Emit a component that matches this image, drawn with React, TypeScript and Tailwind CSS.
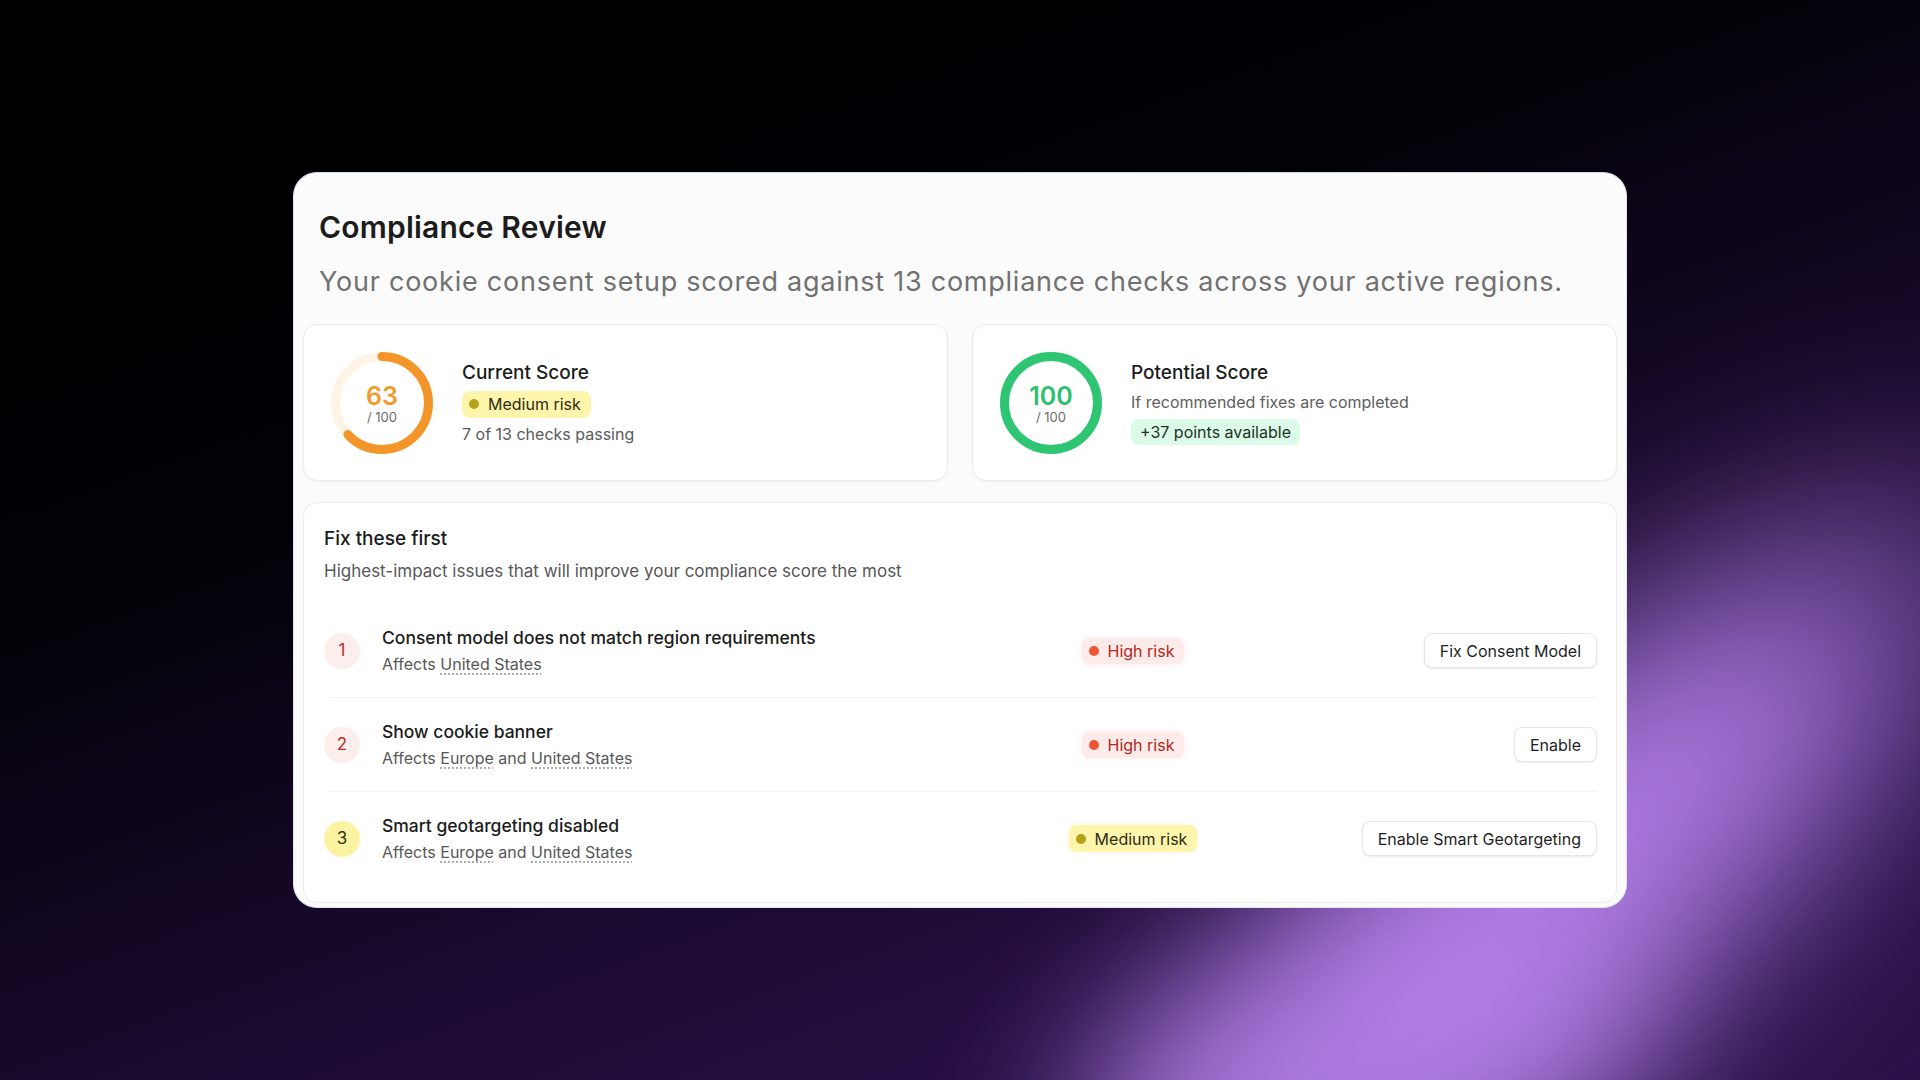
import React from 'react';

type Risk = 'high' | 'medium';

type Issue = {
  n: number;
  title: string;
  regions: string[];
  risk: Risk;
  action: string;
};

const issues: Issue[] = [
  { n: 1, title: 'Consent model does not match region requirements', regions: ['United States'], risk: 'high', action: 'Fix Consent Model' },
  { n: 2, title: 'Show cookie banner', regions: ['Europe', 'United States'], risk: 'high', action: 'Enable' },
  { n: 3, title: 'Smart geotargeting disabled', regions: ['Europe', 'United States'], risk: 'medium', action: 'Enable Smart Geotargeting' },
];

const ScoreRing: React.FC<{ value: number; color: string; track: string; textColor: string }> = ({ value, color, track, textColor }) => {
  const r = 46.5;
  const c = 2 * Math.PI * r;
  return (
    <div className="relative w-[102px] h-[102px] shrink-0">
      <svg width="102" height="102" viewBox="0 0 102 102" className="-rotate-90">
        <circle cx="51" cy="51" r={r} fill="none" stroke={track} strokeWidth="9" />
        <circle
          cx="51"
          cy="51"
          r={r}
          fill="none"
          stroke={color}
          strokeWidth="9"
          strokeLinecap="round"
          strokeDasharray={`${(c * value) / 100} ${c}`}
        />
      </svg>
      <div className="absolute inset-0 flex flex-col items-center justify-center pt-[2px]">
        <span className={`text-[25px] leading-[26px] font-semibold ${textColor}`}>{value}</span>
        <span className="text-[13px] leading-[16px] text-[#6b6b6b]">/ 100</span>
      </div>
    </div>
  );
};

const RiskBadge: React.FC<{ risk: Risk }> = ({ risk }) =>
  risk === 'high' ? (
    <span className="inline-flex items-center h-[26px] pl-[7px] pr-[10px] gap-[9px] rounded-[8px] bg-[#fdebea] text-[16px] text-[#b3281c] shadow-[0_0_6px_rgba(240,90,70,0.12)]">
      <span className="w-[10px] h-[10px] rounded-full bg-[#ef5535]" />
      High risk
    </span>
  ) : (
    <span className="inline-flex items-center h-[27px] pl-[7px] pr-[10px] gap-[9px] rounded-[8px] bg-[#fcf5ab] text-[16px] text-[#2f2c12] shadow-[0_0_6px_rgba(230,210,60,0.18)]">
      <span className="w-[10px] h-[10px] rounded-full bg-[#b5a218]" />
      Medium risk
    </span>
  );

const Region: React.FC<{ name: string }> = ({ name }) => (
  <span className="underline decoration-dotted decoration-[#9a9a9a] underline-offset-[4px]">{name}</span>
);

export default function App() {
  return (
    <div className="relative w-full h-[1080px] overflow-hidden bg-[linear-gradient(160deg,#000000_0%,#020106_35%,#160828_58%,#250e42_80%,#2a1148_100%)] font-['Inter',sans-serif] flex items-center justify-center">
      {/* lavender glow sweeping up the lower right */}
      <div className="absolute left-[910px] top-[650px] w-[1300px] h-[460px] rounded-full bg-[radial-gradient(closest-side,#b27ee6_0%,#ad7ae2_40%,rgba(176,124,228,0)_100%)] blur-[80px] -rotate-[42deg]" />
      <div className="absolute left-[1080px] top-[950px] w-[560px] h-[220px] rounded-full bg-[#b582e9] blur-[80px] -rotate-[22deg] opacity-90" />

      <div className="relative w-[1334px] h-[736px] rounded-[24px] bg-[#fbfbfb] border border-[#dfe4ef] border-t-[#cfdcef] pt-[8px] px-[8px] pb-[4px] flex flex-col">
        <div className="px-[17px] pt-[28px]">
          <h1 className="text-[30px] leading-[36px] font-semibold text-[#1c1c1c] tracking-[0.2px]">Compliance Review</h1>
          <p className="mt-[19px] text-[27px] leading-[36px] text-[#717171] tracking-[0.76px]">
            Your cookie consent setup scored against 13 compliance checks across your active regions.
          </p>
        </div>

        <div className="mt-[24px] grid grid-cols-2 gap-[24px] px-[1px]">
          <div className="h-[157px] rounded-[14px] bg-white border border-[#ececec] shadow-[0_1px_2px_rgba(0,0,0,0.04)] flex items-center pl-[27px] gap-[29px]">
            <ScoreRing value={63} color="#f4952a" track="#fdf4e6" textColor="text-[#f39a2e]" />
            <div className="flex flex-col">
              <span className="text-[19px] leading-[24px] font-medium text-[#1c1c1c]">Current Score</span>
              <span className="mt-[6px] self-start inline-flex items-center h-[27px] pl-[7px] pr-[10px] gap-[9px] rounded-[8px] bg-[#fcf5ab] text-[16px] text-[#2f2c12]">
                <span className="w-[10px] h-[10px] rounded-full bg-[#b5a218]" />
                Medium risk
              </span>
              <span className="mt-[5px] text-[16px] leading-[22px] text-[#5a5a5a]">7 of 13 checks passing</span>
            </div>
          </div>

          <div className="h-[157px] rounded-[14px] bg-white border border-[#ececec] shadow-[0_1px_2px_rgba(0,0,0,0.04)] flex items-center pl-[27px] gap-[29px]">
            <ScoreRing value={100} color="#2ec573" track="#dcf7e7" textColor="text-[#2ec070]" />
            <div className="flex flex-col">
              <span className="text-[19px] leading-[24px] font-medium text-[#1c1c1c]">Potential Score</span>
              <span className="mt-[6px] text-[16px] leading-[22px] text-[#5e5e5e]">If recommended fixes are completed</span>
              <span className="mt-[6px] self-start inline-flex items-center h-[26px] px-[9px] rounded-[8px] bg-[#dbfae7] text-[16px] text-[#1d3326]">
                +37 points available
              </span>
            </div>
          </div>
        </div>

        <div className="mt-[21px] mx-[1px] flex-1 rounded-[14px] bg-white border border-[#ededed] pl-[20px] pr-[19px] pt-[24px] flex flex-col">
          <h2 className="text-[19px] leading-[24px] font-medium text-[#1c1c1c]">Fix these first</h2>
          <p className="mt-[9px] text-[17px] leading-[22px] text-[#575757]">
            Highest-impact issues that will improve your compliance score the most
          </p>

          <div className="mt-[22px] flex flex-col">
            {issues.map((issue, i) => (
              <div key={issue.n} className={i < issues.length - 1 ? 'border-b border-[#f1f1f1] ml-[5px]' : 'ml-[5px]'}>
                <div className="h-[93px] flex items-center -ml-[5px]">
                  <span
                    className={
                      issue.risk === 'high'
                        ? 'w-[36px] h-[36px] rounded-full bg-[#fdeeee] text-[#b8321f] text-[17px] flex items-center justify-center shrink-0'
                        : 'w-[36px] h-[36px] rounded-full bg-[#fbf3a2] text-[#36320f] text-[17px] flex items-center justify-center shrink-0'
                    }
                  >
                    {issue.n}
                  </span>
                  <div className="ml-[22px] flex-1 min-w-0 flex flex-col">
                    <span className="text-[17.5px] leading-[22px] font-medium text-[#1c1c1c]">{issue.title}</span>
                    <span className="mt-[4px] text-[16px] leading-[22px] text-[#585858]">
                      Affects <Region name={issue.regions[0]} />
                      {issue.regions.length > 1 && (
                        <>
                          {' '}and <Region name={issue.regions[1]} />
                        </>
                      )}
                    </span>
                  </div>
                  <div className="w-[200px] flex justify-center">
                    <RiskBadge risk={issue.risk} />
                  </div>
                  <div className="w-[364px] flex justify-end">
                    <button className="h-[35px] px-[15px] rounded-[8px] bg-white border border-[#e6e6e6] shadow-[0_1px_2px_rgba(0,0,0,0.08)] text-[16px] text-[#1f1f1f]">
                      {issue.action}
                    </button>
                  </div>
                </div>
              </div>
            ))}
          </div>
        </div>
      </div>
    </div>
  );
}
